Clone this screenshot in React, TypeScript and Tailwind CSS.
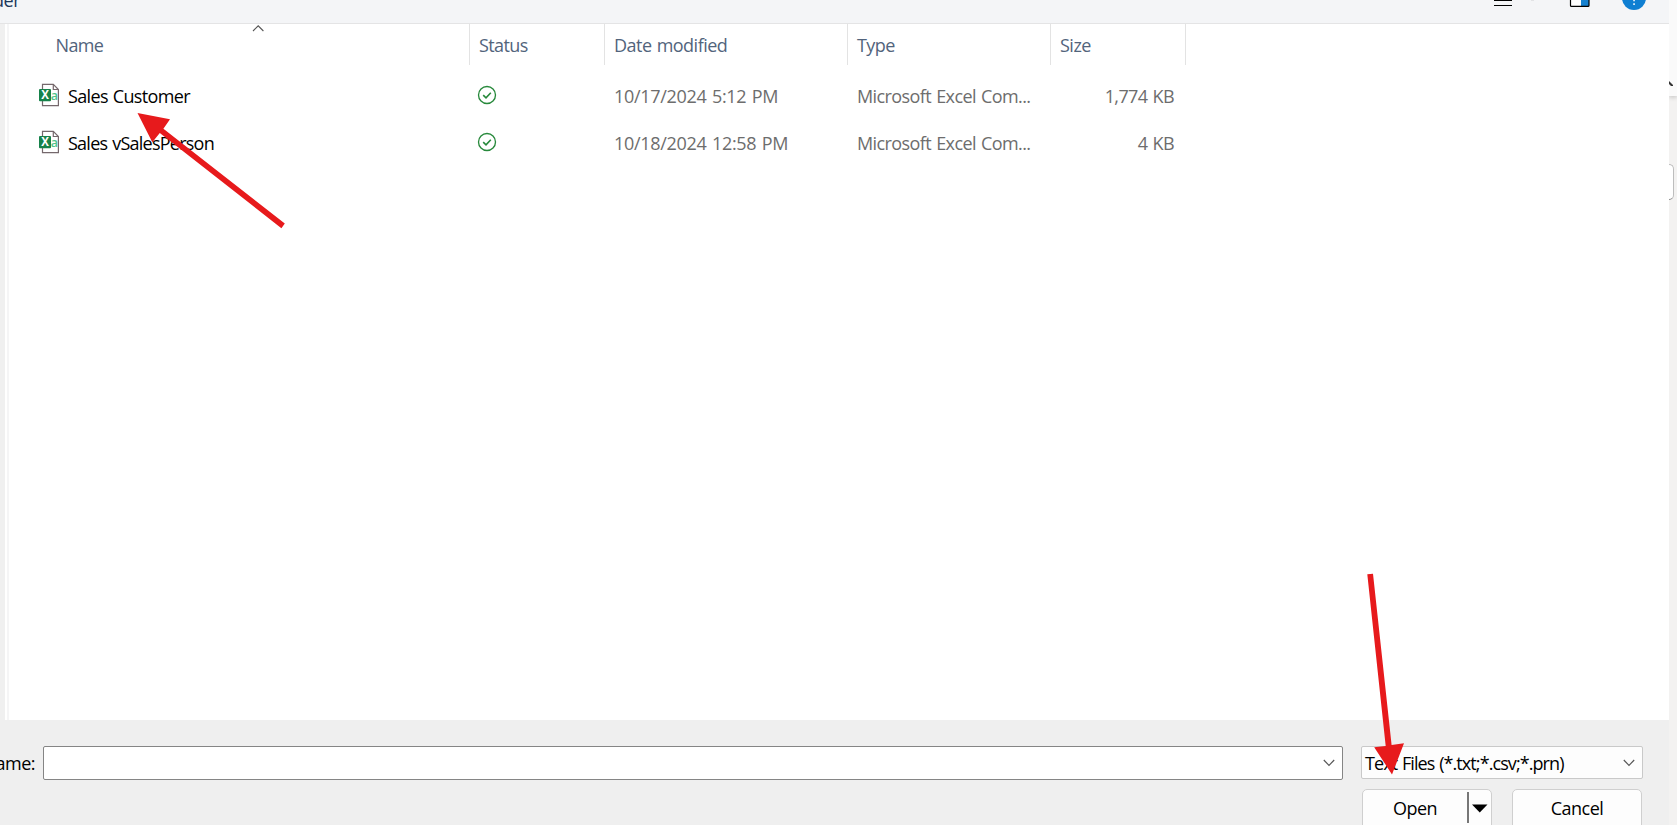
import React from "react";

type FileEntry = { name: string; modified: string; type: string; size: string; nameTracking: string };

const files: FileEntry[] = [
  { name: "Sales Customer", modified: "10/17/2024 5:12 PM", type: "Microsoft Excel Com...", size: "1,774 KB", nameTracking: "tracking-[-0.66px]" },
  { name: "Sales vSalesPerson", modified: "10/18/2024 12:58 PM", type: "Microsoft Excel Com...", size: "4 KB", nameTracking: "tracking-[-0.76px]" },
];

function CsvIcon() {
  return (
    <svg width="22" height="24" viewBox="0 0 22 24" className="shrink-0">
      <path d="M4.5 1.3H15.3L20.4 6.5V22.7H4.5Z" fill="#fff" stroke="#75686c" strokeWidth="1.2" />
      <path d="M15.3 1.3V6.5H20.4" fill="none" stroke="#75686c" strokeWidth="1.2" />
      <rect x="1" y="6" width="12" height="12.3" rx="1" fill="#16824a" />
      <text x="7" y="16.3" textAnchor="middle" fontFamily="Open Sans, sans-serif" fontWeight="700" fontSize="11.5" fill="#fff">X</text>
      <text x="16.4" y="16.6" textAnchor="middle" fontFamily="Open Sans, sans-serif" fontWeight="600" fontSize="12.5" fill="#4fc48b">a</text>
    </svg>
  );
}

function SyncedIcon() {
  return (
    <svg width="20" height="20" viewBox="0 0 20 20" fill="none" stroke="#27893b">
      <circle cx="10" cy="10" r="8.5" strokeWidth="1.35" />
      <path d="M6.2 10.2L9 12.8L13.8 7.8" strokeWidth="1.6" />
    </svg>
  );
}

function Chevron() {
  return (
    <svg width="12" height="8" viewBox="0 0 12 8" fill="none" stroke="#555" strokeWidth="1.15">
      <path d="M.8 1L6 6.4L11.2 1" />
    </svg>
  );
}

export default function App() {
  return (
    <div className="relative flex h-[825px] w-[1677px] overflow-hidden bg-[#f3f2f1] font-['Open_Sans',sans-serif] text-[18px] leading-6 [word-spacing:1px] whitespace-nowrap text-black">
      <div className="flex w-[1669px] shrink-0 flex-col bg-[#efefef]">
        <header className="relative flex h-6 shrink-0 items-start overflow-hidden border-b border-[#e4e4e5] bg-[#f4f5f7]">
          <span className="-mt-[12px] -ml-[7px] tracking-[-0.4px] text-[#1e395b]">der</span>
          <svg width="160" height="23" viewBox="0 0 160 23" className="absolute top-0 left-[1490px]">
            <path d="M4 .5H22M4 5.5H22" stroke="#000" strokeWidth="1.1" />
            <path d="M41 0H44" stroke="#cfd1d4" strokeWidth="1" />
            <rect x="80.5" y="-10" width="18.5" height="16.4" rx="1" fill="#fff" />
            <rect x="91" y="-10" width="8" height="16.4" fill="#1681cf" />
            <rect x="80.5" y="-10" width="18.5" height="16.4" rx="1" fill="none" stroke="#000" strokeWidth="1.2" />
            <circle cx="144" cy="-2" r="12" fill="#0f7fd2" />
            <path d="M143.3 0h1.5v1.2h-1.5zM143.3 3.3h1.5v1.7h-1.5z" fill="#fff" />
          </svg>
        </header>

        <main className="flex h-[696px] shrink-0">
          <div className="w-[5px] bg-[#f0f0f0]" />
          <div className="w-[2px] bg-white" />
          <div className="w-[2px] bg-[#f5f5f6]" />
          <div className="flex flex-1 flex-col bg-white">
            <div className="flex h-[41px] items-center text-[#52647c]">
              <div className="relative flex h-full w-[461px] items-center border-r border-[#e3e3e3] pl-[46.5px]">
                <span className="tracking-[-0.65px]">Name</span>
                <svg width="12" height="8" viewBox="0 0 12 8" fill="none" stroke="#555" strokeWidth="1.1" className="absolute top-0 left-[243px]">
                  <path d="M1 7L6.2 1.8L11.4 7" />
                </svg>
              </div>
              <div className="flex h-full w-[135px] items-center border-r border-[#e3e3e3] pl-[9px] tracking-[-0.6px]">Status</div>
              <div className="flex h-full w-[243px] items-center border-r border-[#e3e3e3] pl-[9px] tracking-[-0.52px]">Date modified</div>
              <div className="flex h-full w-[203px] items-center border-r border-[#e3e3e3] pl-[9px] tracking-[-0.6px]">Type</div>
              <div className="flex h-full w-[135px] items-center border-r border-[#e3e3e3] pl-[9px] tracking-[-0.5px]">Size</div>
            </div>
            <div className="flex flex-col pt-2">
              {files.map((f) => (
                <div key={f.name} className="flex h-[47px] items-center text-[#6d6d6d]">
                  <div className="flex w-[460px] items-center pb-[2px] pl-[29px]">
                    <div className="-mt-[1px]"><CsvIcon /></div>
                    <span className={"ml-[8px] text-black " + f.nameTracking}>{f.name}</span>
                  </div>
                  <div className="w-[136px] pb-[3px] pl-[8px]"><SyncedIcon /></div>
                  <div className="w-[243px] pb-[2px] pl-[9px] tracking-[-0.3px]">{f.modified}</div>
                  <div className="w-[203px] pb-[2px] pl-[9px] tracking-[-0.59px]">{f.type}</div>
                  <div className="w-[123px] pb-[2px] text-right tracking-[-0.6px]">{f.size}</div>
                </div>
              ))}
            </div>
          </div>
        </main>

        <footer className="flex flex-1 flex-col pt-[26px]">
          <div className="flex h-[34px] items-start">
            <div className="flex h-full w-[43px] items-center justify-end pr-[8px] tracking-[-0.5px]">name:</div>
            <div className="flex h-[34px] w-[1300px] items-center justify-end rounded-[2px] border border-[#858585] bg-white pr-[7px]">
              <Chevron />
            </div>
            <div className="ml-[18px] flex h-[33px] w-[282px] items-center justify-between rounded-[2px] border border-[#c9c9c9] bg-[#fdfdfd] pr-[7px] pl-[3px]">
              <span className="tracking-[-0.92px]">Text Files (*.txt;*.csv;*.prn)</span>
              <Chevron />
            </div>
          </div>
          <div className="mt-[9px] flex pl-[1362px]">
            <button className="flex h-[42px] w-[130px] rounded-[5px] border border-[#cfcfcf] bg-[#fdfdfd]">
              <span className="w-[104px] pt-[6px] text-center tracking-[-0.5px]">Open</span>
              <span className="mt-[2px] h-[31px] w-[2px] bg-[#777]" />
              <svg width="16" height="9" viewBox="0 0 16 9" className="mt-[14px] ml-[3px]"><path d="M0 .5H15.5L7.75 8.5Z" /></svg>
            </button>
            <button className="ml-5 h-[42px] w-[130px] rounded-[5px] border border-[#cfcfcf] bg-[#fdfdfd] pb-[4px] tracking-[-0.5px]">Cancel</button>
          </div>
        </footer>
      </div>

      <aside className="flex w-2 flex-col overflow-hidden">
        <div className="h-24 shrink-0 bg-[#fafafa] pt-[81px] shadow-[0_1px_5px_rgba(0,0,0,0.22)]">
          <svg width="4" height="5" viewBox="0 0 4 5"><path d="M0 0L4 4V5H2L0 3Z" fill="#333" /></svg>
        </div>
        <div className="mt-[68px] -ml-4 h-9 w-[21px] rounded-[5px] border border-[#bdbdbd] border-b-[#888] bg-white" />
      </aside>

      <svg width="1677" height="825" viewBox="0 0 1677 825" className="pointer-events-none absolute inset-0" fill="#e71a1c">
        <path d="M137.5 113L170 119.3L163.4 128.7L284.8 223.5L281.4 228.2L159.8 133L152.3 142.2Z" />
        <path d="M1392 774.5L1374.2 747.3L1385.7 746L1367.3 574.3L1373 573.8L1391.6 744.9L1404 743.3Z" />
      </svg>
    </div>
  );
}
